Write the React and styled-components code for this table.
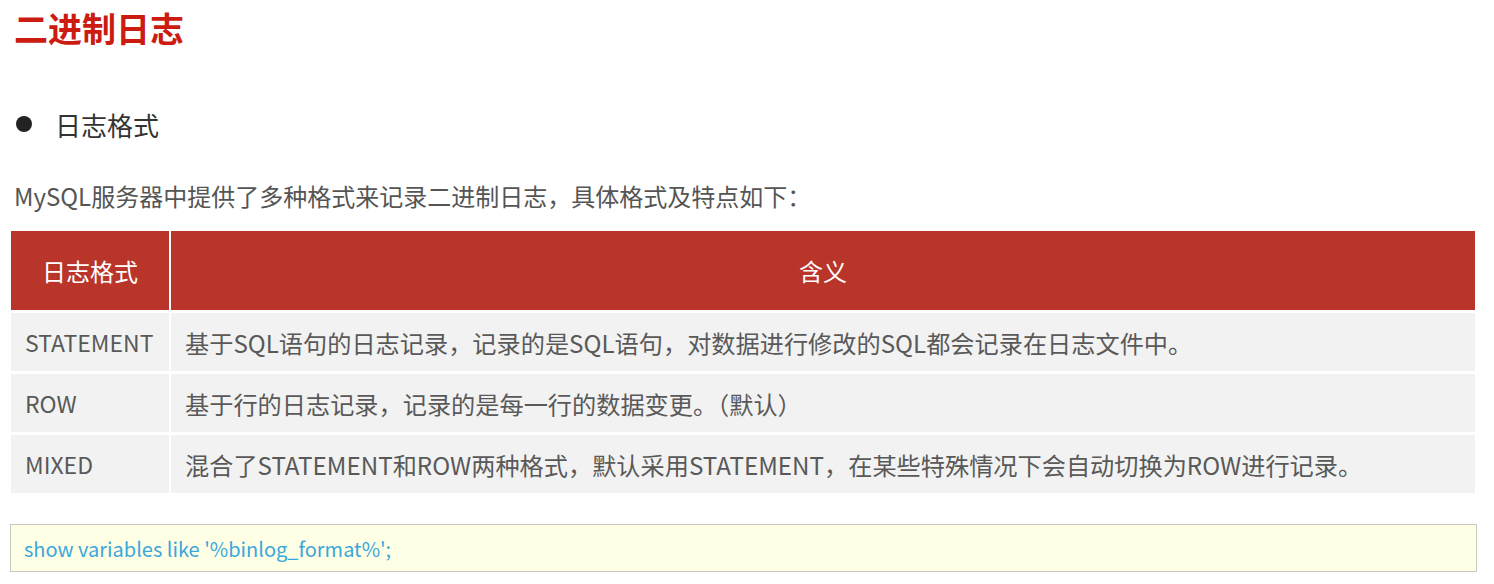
import styled, { createGlobalStyle } from "styled-components";

const GlobalStyle = createGlobalStyle`
  body {
    margin: 0;
    background: #ffffff;
    font-family: "Noto Sans CJK SC", "Noto Sans", sans-serif;
  }
`;

const Page = styled.div`
  width: 1494px;
  height: 584px;
  overflow: hidden;
  display: flex;
  flex-direction: column;
  padding: 8px 0 0 10px;
  box-sizing: border-box;
`;

const Title = styled.h1`
  margin: 0 0 0 4px;
  font-size: 34px;
  line-height: 40px;
  font-weight: 700;
  color: #cc1b10;
`;

const BulletRow = styled.div`
  display: flex;
  align-items: center;
  gap: 23px;
  margin: 56px 0 0 6px;
  height: 40px;
  font-size: 26px;
  color: #333333;
`;

const Dot = styled.span`
  width: 16px;
  height: 16px;
  border-radius: 50%;
  background: #222222;
  flex: none;
`;

const Intro = styled.p`
  margin: 36px 0 0 4px;
  font-size: 24px;
  line-height: 32px;
  color: #555555;
`;

const Table = styled.div`
  margin: 19px 0 0 1px;
  width: 1464px;
  display: grid;
  grid-template-columns: 158px 1fr;
  column-gap: 2px;
  row-gap: 3px;
  background: #ffffff;
`;

const HeadCell = styled.div`
  height: 79px;
  background: #b9352a;
  color: #ffffff;
  font-size: 24px;
  display: flex;
  align-items: center;
  justify-content: center;
`;

const Cell = styled.div`
  height: 58px;
  background: #f2f2f2;
  color: #595959;
  font-size: ${(p) => (p.$name ? "23px" : "24.2px")};
  display: flex;
  align-items: center;
  padding-left: 14px;
  white-space: nowrap;
`;

const CodeBox = styled.div`
  margin-top: 31px;
  width: 1467px;
  height: 48px;
  box-sizing: border-box;
  border: 1px solid #c9c9c4;
  background: #ffffe6;
  display: flex;
  align-items: center;
  padding-left: 13px;
  font-size: 20px;
  color: #3aa7db;
`;

const rows = [
  [
    "STATEMENT",
    "基于SQL语句的日志记录，记录的是SQL语句，对数据进行修改的SQL都会记录在日志文件中。",
  ],
  ["ROW", "基于行的日志记录，记录的是每一行的数据变更。（默认）"],
  [
    "MIXED",
    "混合了STATEMENT和ROW两种格式，默认采用STATEMENT，在某些特殊情况下会自动切换为ROW进行记录。",
  ],
];

export default function App() {
  return (
    <Page>
      <GlobalStyle />
      <Title>二进制日志</Title>
      <BulletRow>
        <Dot />
        <span>日志格式</span>
      </BulletRow>
      <Intro>MySQL服务器中提供了多种格式来记录二进制日志，具体格式及特点如下：</Intro>
      <Table>
        <HeadCell>日志格式</HeadCell>
        <HeadCell>含义</HeadCell>
        {rows.map(([name, desc]) => [
          <Cell key={name} $name>
            {name}
          </Cell>,
          <Cell key={name + "-d"}>{desc}</Cell>,
        ])}
      </Table>
      <CodeBox>show variables like '%binlog_format%';</CodeBox>
    </Page>
  );
}
